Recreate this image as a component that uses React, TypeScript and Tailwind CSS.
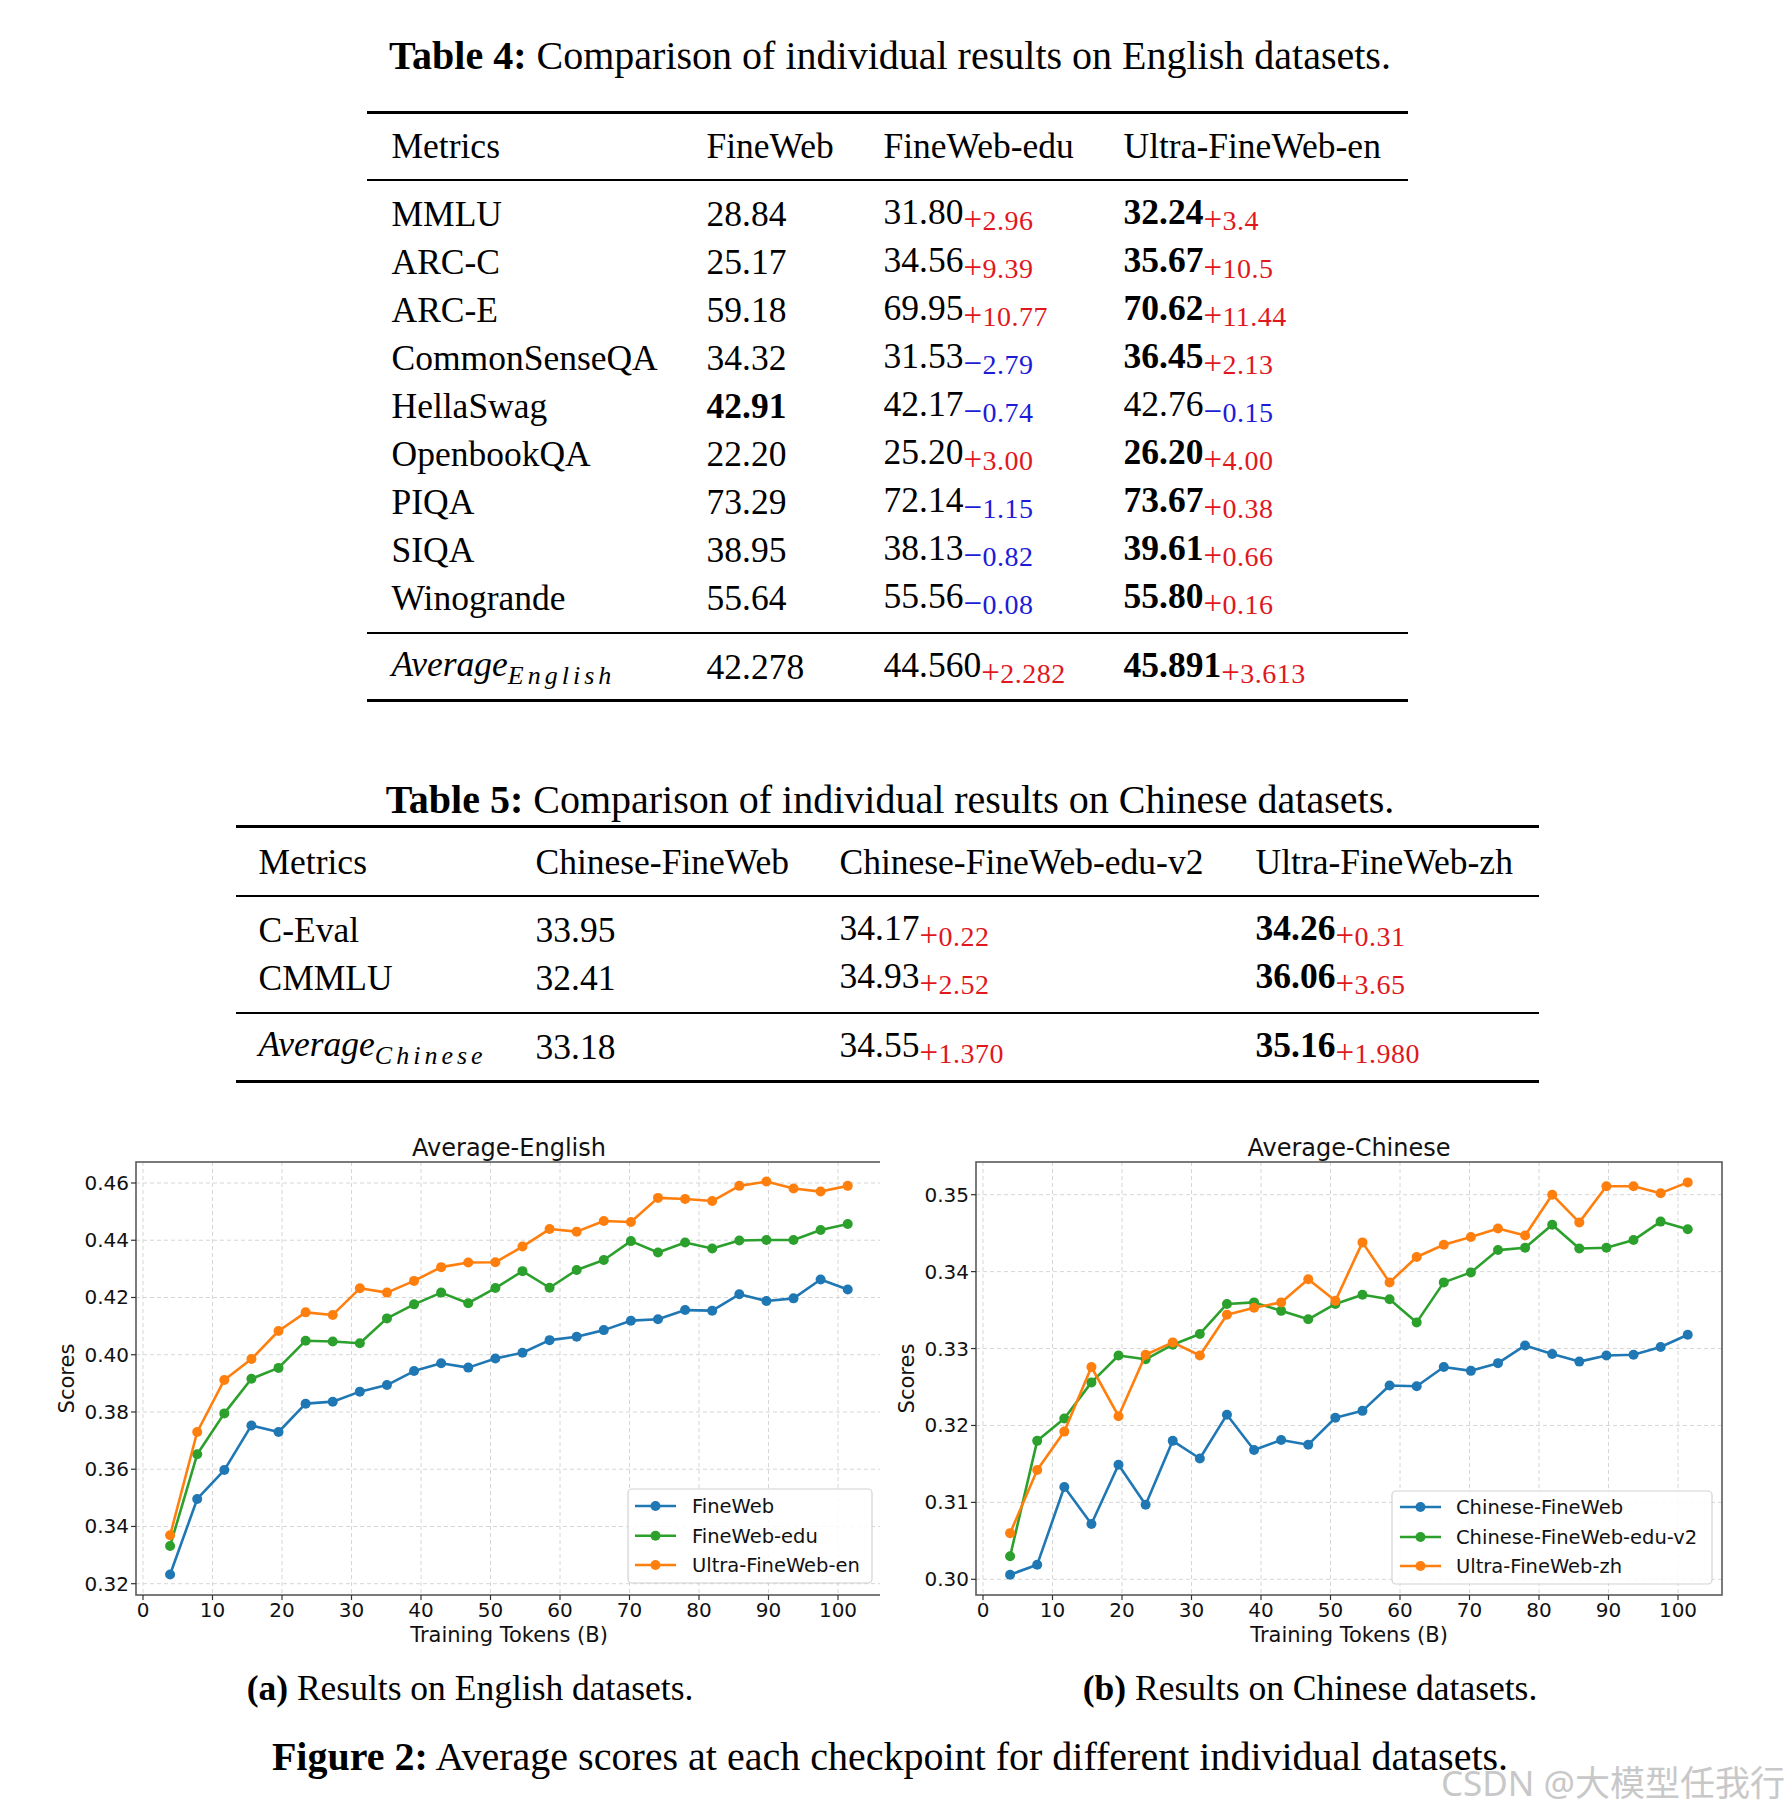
import React from "react";

type Cell = { v: string; d?: string; b?: boolean };
type Row = { name: string; cells: Cell[] };

const t4: Row[] = [
  { name: "MMLU", cells: [{ v: "28.84" }, { v: "31.80", d: "+2.96" }, { v: "32.24", d: "+3.4", b: true }] },
  { name: "ARC-C", cells: [{ v: "25.17" }, { v: "34.56", d: "+9.39" }, { v: "35.67", d: "+10.5", b: true }] },
  { name: "ARC-E", cells: [{ v: "59.18" }, { v: "69.95", d: "+10.77" }, { v: "70.62", d: "+11.44", b: true }] },
  { name: "CommonSenseQA", cells: [{ v: "34.32" }, { v: "31.53", d: "−2.79" }, { v: "36.45", d: "+2.13", b: true }] },
  { name: "HellaSwag", cells: [{ v: "42.91", b: true }, { v: "42.17", d: "−0.74" }, { v: "42.76", d: "−0.15" }] },
  { name: "OpenbookQA", cells: [{ v: "22.20" }, { v: "25.20", d: "+3.00" }, { v: "26.20", d: "+4.00", b: true }] },
  { name: "PIQA", cells: [{ v: "73.29" }, { v: "72.14", d: "−1.15" }, { v: "73.67", d: "+0.38", b: true }] },
  { name: "SIQA", cells: [{ v: "38.95" }, { v: "38.13", d: "−0.82" }, { v: "39.61", d: "+0.66", b: true }] },
  { name: "Winogrande", cells: [{ v: "55.64" }, { v: "55.56", d: "−0.08" }, { v: "55.80", d: "+0.16", b: true }] },
];
const t4avg: Cell[] = [{ v: "42.278" }, { v: "44.560", d: "+2.282" }, { v: "45.891", d: "+3.613", b: true }];

const t5: Row[] = [
  { name: "C-Eval", cells: [{ v: "33.95" }, { v: "34.17", d: "+0.22" }, { v: "34.26", d: "+0.31", b: true }] },
  { name: "CMMLU", cells: [{ v: "32.41" }, { v: "34.93", d: "+2.52" }, { v: "36.06", d: "+3.65", b: true }] },
];
const t5avg: Cell[] = [{ v: "33.18" }, { v: "34.55", d: "+1.370" }, { v: "35.16", d: "+1.980", b: true }];

// small coloured gain / loss written after a score, like a LaTeX subscript
function Delta({ d }: { d: string }) {
  const neg = d.startsWith("−");
  return (
    <span className={`text-[28px] align-[-6px] tracking-[0.5px] ${neg ? "text-[#1c1cd8]" : "text-[#e0181e]"}`}>
      <span className="inline-block w-[19px] text-center text-[33px] leading-none tracking-normal">{d.slice(0, 1)}</span>
      {d.slice(1)}
    </span>
  );
}

function Val({ c }: { c: Cell }) {
  return (
    <span className="whitespace-nowrap">
      <span className={c.b ? "font-bold" : ""}>{c.v}</span>
      {c.d && <Delta d={c.d} />}
    </span>
  );
}

function Avg({ sub }: { sub: string }) {
  return (
    <span className="italic whitespace-nowrap">
      Average
      <span className="text-[26px] tracking-[4px] align-[-8px]">{sub}</span>
    </span>
  );
}

const tabBlue = "#1f77b4";
const tabGreen = "#2ca02c";
const tabOrange = "#ff7f0e";

type Series = { name: string; color: string; ys: number[] };

const enSeries: Series[] = [
  {
    name: "FineWeb",
    color: tabBlue,
    ys: [0.3232, 0.3496, 0.3597, 0.3753, 0.373, 0.3829, 0.3836, 0.3871, 0.3894, 0.3943, 0.397, 0.3955, 0.3987, 0.4007, 0.4051, 0.4063, 0.4086, 0.4119, 0.4124, 0.4156, 0.4154, 0.4211, 0.4188, 0.4197, 0.4263, 0.4228],
  },
  {
    name: "FineWeb-edu",
    color: tabGreen,
    ys: [0.3332, 0.3652, 0.3795, 0.3916, 0.3954, 0.4049, 0.4046, 0.404, 0.4127, 0.4176, 0.4217, 0.418, 0.4233, 0.4292, 0.4234, 0.4296, 0.4331, 0.4397, 0.4357, 0.4392, 0.4371, 0.4399, 0.4401, 0.4401, 0.4436, 0.4457],
  },
  {
    name: "Ultra-FineWeb-en",
    color: tabOrange,
    ys: [0.3369, 0.373, 0.3912, 0.3985, 0.4083, 0.4148, 0.4139, 0.4232, 0.4217, 0.4258, 0.4306, 0.4322, 0.4323, 0.4378, 0.4439, 0.443, 0.4467, 0.4464, 0.4548, 0.4544, 0.4537, 0.459, 0.4605, 0.4581, 0.457, 0.459],
  },
];

const zhSeries: Series[] = [
  {
    name: "Chinese-FineWeb",
    color: tabBlue,
    ys: [0.3006, 0.3019, 0.312, 0.3072, 0.3149, 0.3097, 0.318, 0.3157, 0.3214, 0.3168, 0.3181, 0.3175, 0.321, 0.3219, 0.3252, 0.3251, 0.3276, 0.3271, 0.3281, 0.3304, 0.3293, 0.3283, 0.3291, 0.3292, 0.3302, 0.3318],
  },
  {
    name: "Chinese-FineWeb-edu-v2",
    color: tabGreen,
    ys: [0.303, 0.318, 0.3209, 0.3256, 0.3291, 0.3286, 0.3305, 0.3319, 0.3358, 0.336, 0.3349, 0.3338, 0.3358, 0.337, 0.3364, 0.3334, 0.3386, 0.3399, 0.3428, 0.3431, 0.3461, 0.343, 0.3431, 0.3441, 0.3465, 0.3455],
  },
  {
    name: "Ultra-FineWeb-zh",
    color: tabOrange,
    ys: [0.306, 0.3142, 0.3192, 0.3276, 0.3212, 0.3292, 0.3308, 0.3291, 0.3344, 0.3353, 0.336, 0.339, 0.3362, 0.3438, 0.3386, 0.3419, 0.3435, 0.3445, 0.3456, 0.3447, 0.35, 0.3464, 0.3511, 0.3511, 0.3502, 0.3516],
  },
];

// plot frame, in svg pixels
const X0 = 103;
const XS = 6.95;
const FL = 96;
const FR = 842;
const FT = 37;
const FB = 470;

type ChartProps = {
  width: number;
  title: string;
  ticks: number[];
  topV: number;
  topPx: number;
  botV: number;
  botPx: number;
  series: Series[];
  legend: { x: number; y: number; w: number; h: number; rows: number[]; lx: number; tx: number };
};

function Chart({ width, title, ticks, topV, topPx, botV, botPx, series, legend }: ChartProps) {
  const yPx = (v: number) => topPx + ((topV - v) / (topV - botV)) * (botPx - topPx);
  const xPx = (v: number) => X0 + v * XS;
  const xTicks = [0, 10, 20, 30, 40, 50, 60, 70, 80, 90, 100];
  const font = "DejaVu Sans";
  return (
    <svg width={width} height={530} className="shrink-0">
      {xTicks.map((t) => (
        <line key={"gx" + t} x1={xPx(t)} x2={xPx(t)} y1={FT} y2={FB} stroke="#d6d6d6" strokeWidth={1} strokeDasharray="4 3" />
      ))}
      {ticks.map((t) => (
        <line key={"gy" + t} x1={FL} x2={FR} y1={yPx(t)} y2={yPx(t)} stroke="#d6d6d6" strokeWidth={1} strokeDasharray="4 3" />
      ))}
      <rect x={FL} y={FT} width={FR - FL} height={FB - FT} fill="none" stroke="#5a5a5a" strokeWidth={1.6} />
      {xTicks.map((t) => (
        <g key={"tx" + t}>
          <line x1={xPx(t)} x2={xPx(t)} y1={FB} y2={FB + 5} stroke="#333" strokeWidth={1.2} />
          <text x={xPx(t)} y={492} fontFamily={font} fontSize={20} textAnchor="middle" fill="#111">
            {t}
          </text>
        </g>
      ))}
      {ticks.map((t) => (
        <g key={"ty" + t}>
          <line x1={FL - 5} x2={FL} y1={yPx(t)} y2={yPx(t)} stroke="#333" strokeWidth={1.2} />
          <text x={89} y={yPx(t) + 7} fontFamily={font} fontSize={20} textAnchor="end" fill="#111">
            {t.toFixed(2)}
          </text>
        </g>
      ))}
      {series.map((s) => {
        const pts = s.ys.map((v, i) => [xPx(3.9 * (i + 1)), yPx(v)]);
        return (
          <g key={s.name}>
            <polyline points={pts.map((p) => p.join(",")).join(" ")} fill="none" stroke={s.color} strokeWidth={2.6} strokeLinejoin="round" />
            {pts.map((p, i) => (
              <circle key={i} cx={p[0]} cy={p[1]} r={5} fill={s.color} />
            ))}
          </g>
        );
      })}
      <rect x={legend.x} y={legend.y} width={legend.w} height={legend.h} rx={4} fill="#ffffff" fillOpacity={0.85} stroke="#d2d2d2" strokeWidth={1.2} />
      {series.map((s, i) => (
        <g key={"lg" + s.name}>
          <line x1={legend.lx} x2={legend.lx + 41} y1={legend.rows[i]} y2={legend.rows[i]} stroke={s.color} strokeWidth={2.6} />
          <circle cx={legend.lx + 20.5} cy={legend.rows[i]} r={5} fill={s.color} />
          <text x={legend.tx} y={legend.rows[i] + 7} fontFamily={font} fontSize={19.5} fill="#111">
            {s.name}
          </text>
        </g>
      ))}
      <text x={(FL + FR) / 2} y={31} fontFamily={font} fontSize={24} textAnchor="middle" fill="#111">
        {title}
      </text>
      <text x={(FL + FR) / 2} y={517} fontFamily={font} fontSize={21} textAnchor="middle" fill="#111">
        Training Tokens (B)
      </text>
      <text x={0} y={0} fontFamily={font} fontSize={21} textAnchor="middle" fill="#111" transform={`translate(34 ${(FT + FB) / 2}) rotate(-90)`}>
        Scores
      </text>
    </svg>
  );
}

export default function App() {
  return (
    <div className="relative w-[1788px] h-[1812px] bg-white overflow-hidden text-black font-['Liberation_Serif','Times_New_Roman',serif]">
      <div className="flex flex-col items-center pr-[14px] pt-[33px]">
        <h2 className="pl-[6px] text-[40px] leading-[46px] whitespace-nowrap">
          <span className="font-bold">Table 4:</span> Comparison of individual results on English datasets.
        </h2>

        <div className="mt-[32px] w-[1041px] border-t-[3px] border-b-[3px] border-black text-[35.5px]">
          <div className="grid grid-cols-[315px_177px_240px_1fr] pl-[25px] h-[67px] items-center border-b-2 border-black leading-none">
            <span>Metrics</span>
            <span>FineWeb</span>
            <span>FineWeb-edu</span>
            <span>Ultra-FineWeb-en</span>
          </div>
          <div className="pt-[10px] pb-[9px]">
            {t4.map((r) => (
              <div key={r.name} className="grid grid-cols-[315px_177px_240px_1fr] pl-[25px] h-[48px] items-center leading-none">
                <span>{r.name}</span>
                {r.cells.map((c, i) => (
                  <Val key={i} c={c} />
                ))}
              </div>
            ))}
          </div>
          <div className="grid grid-cols-[315px_177px_240px_1fr] pl-[25px] pt-[3px] h-[67px] items-center border-t-2 border-black leading-none">
            <Avg sub="English" />
            {t4avg.map((c, i) => (
              <Val key={i} c={c} />
            ))}
          </div>
        </div>

        <h2 className="mt-[75px] pl-[6px] text-[40px] leading-[46px] whitespace-nowrap">
          <span className="font-bold">Table 5:</span> Comparison of individual results on Chinese datasets.
        </h2>

        <div className="mt-[2px] w-[1303px] border-t-[3px] border-b-[3px] border-black text-[35.5px]">
          <div className="grid grid-cols-[277px_304px_416px_1fr] pl-[23px] pt-[2px] h-[69px] items-center border-b-2 border-black leading-none">
            <span>Metrics</span>
            <span>Chinese-FineWeb</span>
            <span>Chinese-FineWeb-edu-v2</span>
            <span>Ultra-FineWeb-zh</span>
          </div>
          <div className="pt-[10px] pb-[9px]">
            {t5.map((r) => (
              <div key={r.name} className="grid grid-cols-[277px_304px_416px_1fr] pl-[23px] h-[48px] items-center leading-none">
                <span>{r.name}</span>
                {r.cells.map((c, i) => (
                  <Val key={i} c={c} />
                ))}
              </div>
            ))}
          </div>
          <div className="grid grid-cols-[277px_304px_416px_1fr] pl-[23px] pt-[2px] h-[68px] items-center border-t-2 border-black leading-none">
            <Avg sub="Chinese" />
            {t5avg.map((c, i) => (
              <Val key={i} c={c} />
            ))}
          </div>
        </div>

        <div className="self-stretch mt-[42px] flex pl-[40px]">
          <Chart
            width={840}
            title="Average-English"
            ticks={[0.32, 0.34, 0.36, 0.38, 0.4, 0.42, 0.44, 0.46]}
            topV={0.46}
            topPx={58}
            botV={0.32}
            botPx={458.7}
            series={enSeries}
            legend={{ x: 588, y: 364, w: 244, h: 94, rows: [381, 410.7, 440], lx: 595, tx: 652 }}
          />
          <Chart
            width={860}
            title="Average-Chinese"
            ticks={[0.3, 0.31, 0.32, 0.33, 0.34, 0.35]}
            topV={0.35}
            topPx={69.7}
            botV={0.3}
            botPx={454.3}
            series={zhSeries}
            legend={{ x: 512, y: 366, w: 320, h: 93, rows: [382, 412, 441], lx: 520, tx: 576 }}
          />
        </div>

        <div className="self-stretch mt-[11px] flex pl-[40px] text-[35.5px] leading-[44px]">
          <div className="w-[860px] text-center whitespace-nowrap">
            <span className="font-bold">(a)</span> Results on English datasets.
          </div>
          <div className="w-[820px] text-center whitespace-nowrap">
            <span className="font-bold">(b)</span> Results on Chinese datasets.
          </div>
        </div>

        <p className="mt-[24px] pl-[6px] text-[40px] leading-[46px] whitespace-nowrap">
          <span className="font-bold">Figure 2:</span> Average scores at each checkpoint for different individual datasets.
        </p>
      </div>

      <div className="absolute right-[3px] bottom-[12px] text-[35px] leading-none text-[#c8c8c8] whitespace-nowrap font-['Noto_Sans','Noto_Sans_CJK_SC',sans-serif]">
        CSDN @大模型任我行
      </div>
    </div>
  );
}
